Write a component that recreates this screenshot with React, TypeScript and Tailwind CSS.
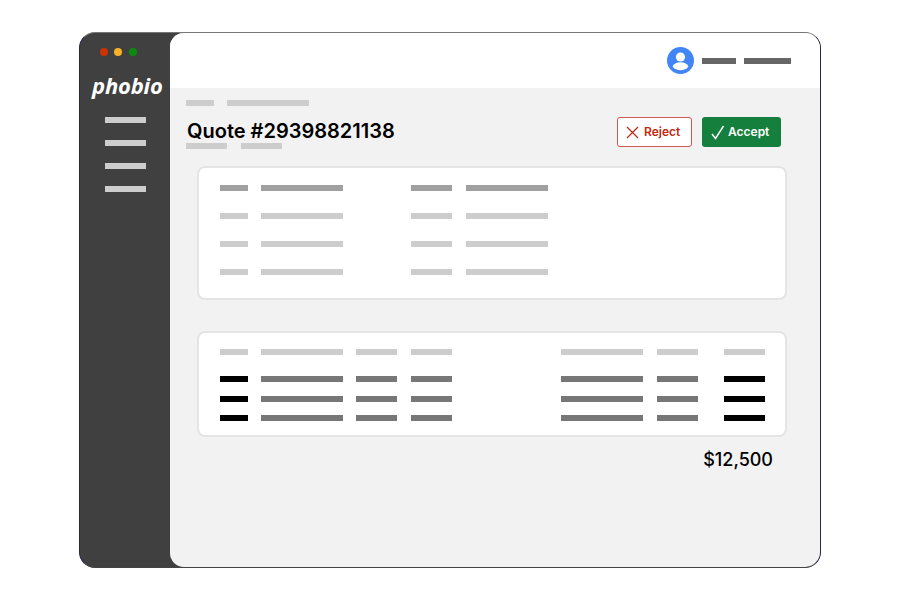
import React from "react";

// Placeholder line standing in for text
const Bar: React.FC<{ className: string }> = ({ className }) => (
  <div className={`h-1.5 shrink-0 ${className}`} />
);

const menu = [0, 1, 2, 3];
const detailRows = [0, 1, 2];

const Sidebar = () => (
  <aside className="w-[90px] shrink-0 flex flex-col">
    <div className="flex gap-[6.5px] pl-[19.5px] pt-[15px]">
      <span className="w-2 h-2 rounded-full bg-[#cc3300]" />
      <span className="w-2 h-2 rounded-full bg-[#fbb124]" />
      <span className="w-2 h-2 rounded-full bg-[#0b8a0b]" />
    </div>
    <div className="pl-[12px] mt-[13px] h-[32px] text-[22px] leading-[32px] font-bold italic text-white font-['Open_Sans',sans-serif] tracking-[-0.2px]">
      phobio
    </div>
    <nav className="flex flex-col gap-[17px] pl-[25px] mt-[16px]">
      {menu.map((m) => (
        <Bar key={m} className="w-[41px] bg-[#cdcdcd]" />
      ))}
    </nav>
  </aside>
);

const Header = () => (
  <header className="h-[55px] shrink-0 bg-white flex items-center justify-end pr-[29px] gap-[8px]">
    <svg width="27" height="27" viewBox="0 0 27 27">
      <circle cx="13.5" cy="13.5" r="13.5" fill="#4285f4" />
      <circle cx="13.5" cy="10" r="4.6" fill="#fff" />
      <path d="M5.5 19.5c1.5-3 4.6-4.2 8-4.2s6.5 1.2 8 4.2a10.2 10.2 0 0 1-16 0z" fill="#fff" />
    </svg>
    <Bar className="w-[34px] bg-[#666666]" />
    <Bar className="w-[47px] bg-[#666666]" />
  </header>
);

const TitleRow = () => (
  <div className="pl-4 pr-[39px] pt-3 font-['Inter',sans-serif]">
    <div className="flex gap-[13px]">
      <Bar className="w-[28px] bg-[#cdcdcd]" />
      <Bar className="w-[82px] bg-[#cdcdcd]" />
    </div>
    <div className="flex items-center justify-between h-[30px] mt-[11px]">
      <h1 className="pl-[1px] mt-[-2px] text-[20px] font-semibold text-black leading-none">Quote #29398821138</h1>
      <div className="flex gap-[10px] text-[12px] font-semibold">
        <button className="w-[75px] h-[30px] rounded-[3px] border border-[#cc5a4c] bg-white text-[#c2280f] flex items-center pl-[8px] gap-[5px]" type="button">
          <svg width="13" height="13" viewBox="0 0 13 13" fill="none" stroke="currentColor" strokeWidth="1.2">
            <path d="M1 1l11 11M12 1L1 12" />
          </svg>
          Reject
        </button>
        <button className="w-[79px] h-[30px] rounded-[3px] bg-[#15803d] text-white flex items-center pl-[9px] gap-[3px]" type="button">
          <svg width="14" height="15" viewBox="0 0 14 15" fill="none" stroke="currentColor" strokeWidth="1.4">
            <path d="M1 9l3.5 4.5L12.5 1" />
          </svg>
          Accept
        </button>
      </div>
    </div>
    <div className="flex gap-[14px] mt-[-4px]">
      <Bar className="w-[41px] bg-[#cdcdcd]" />
      <Bar className="w-[41px] bg-[#cdcdcd]" />
    </div>
  </div>
);

const SummaryCard = () => (
  <section className="h-[134px] rounded-lg border-2 border-[#e4e4e4] bg-white pl-[21px] pt-[17px] flex flex-col gap-[22px]">
    {[0, 1, 2, 3].map((i) => (
      <div key={i} className="flex">
        <Bar className={`w-[28px] ${i === 0 ? "bg-[#a0a0a0]" : "bg-[#cdcdcd]"}`} />
        <Bar className={`w-[82px] ml-[13px] ${i === 0 ? "bg-[#a0a0a0]" : "bg-[#cdcdcd]"}`} />
        <Bar className={`w-[41px] ml-[68px] ${i === 0 ? "bg-[#a0a0a0]" : "bg-[#cdcdcd]"}`} />
        <Bar className={`w-[82px] ml-[14px] ${i === 0 ? "bg-[#a0a0a0]" : "bg-[#cdcdcd]"}`} />
      </div>
    ))}
  </section>
);

const LineRow: React.FC<{ edge: string; mid: string }> = ({ edge, mid }) => (
  <div className="flex">
    <Bar className={`w-[28px] ${edge}`} />
    <Bar className={`w-[82px] ml-[13px] ${mid}`} />
    <Bar className={`w-[41px] ml-[13px] ${mid}`} />
    <Bar className={`w-[41px] ml-[14px] ${mid}`} />
    <Bar className={`w-[82px] ml-[109px] ${mid}`} />
    <Bar className={`w-[41px] ml-[14px] ${mid}`} />
    <Bar className={`w-[41px] ml-[26px] ${edge}`} />
  </div>
);

const LinesCard = () => (
  <section className="h-[106px] rounded-lg border-2 border-[#e4e4e4] bg-white pl-[21px] pt-[16px]">
    <LineRow edge="bg-[#cdcdcd]" mid="bg-[#cdcdcd]" />
    <div className="flex flex-col gap-[13.5px] mt-[21px]">
      {detailRows.map((r) => (
        <LineRow key={r} edge="bg-black" mid="bg-[#777777]" />
      ))}
    </div>
  </section>
);

export default function App() {
  return (
    <div className="w-[900px] h-[600px] bg-white flex items-center justify-center">
      <div className="w-[742px] h-[536px] flex bg-[#404040] rounded-[16px] overflow-hidden border border-[#2a2545] border-t-[#777777] border-b-[#444444]">
        <Sidebar />
        <main className="flex-1 flex flex-col bg-[#f2f2f2] rounded-l-[14px] overflow-hidden">
          <Header />
          <TitleRow />
          <div className="pl-[27px] pr-[33px] mt-[17px] flex flex-col gap-[31px]">
            <SummaryCard />
            <LinesCard />
          </div>
          <div className="pr-[47px] mt-[9px] text-right text-[18px] leading-[28px] font-medium text-black font-['Inter',sans-serif]">
            $12,500
          </div>
        </main>
      </div>
    </div>
  );
}
